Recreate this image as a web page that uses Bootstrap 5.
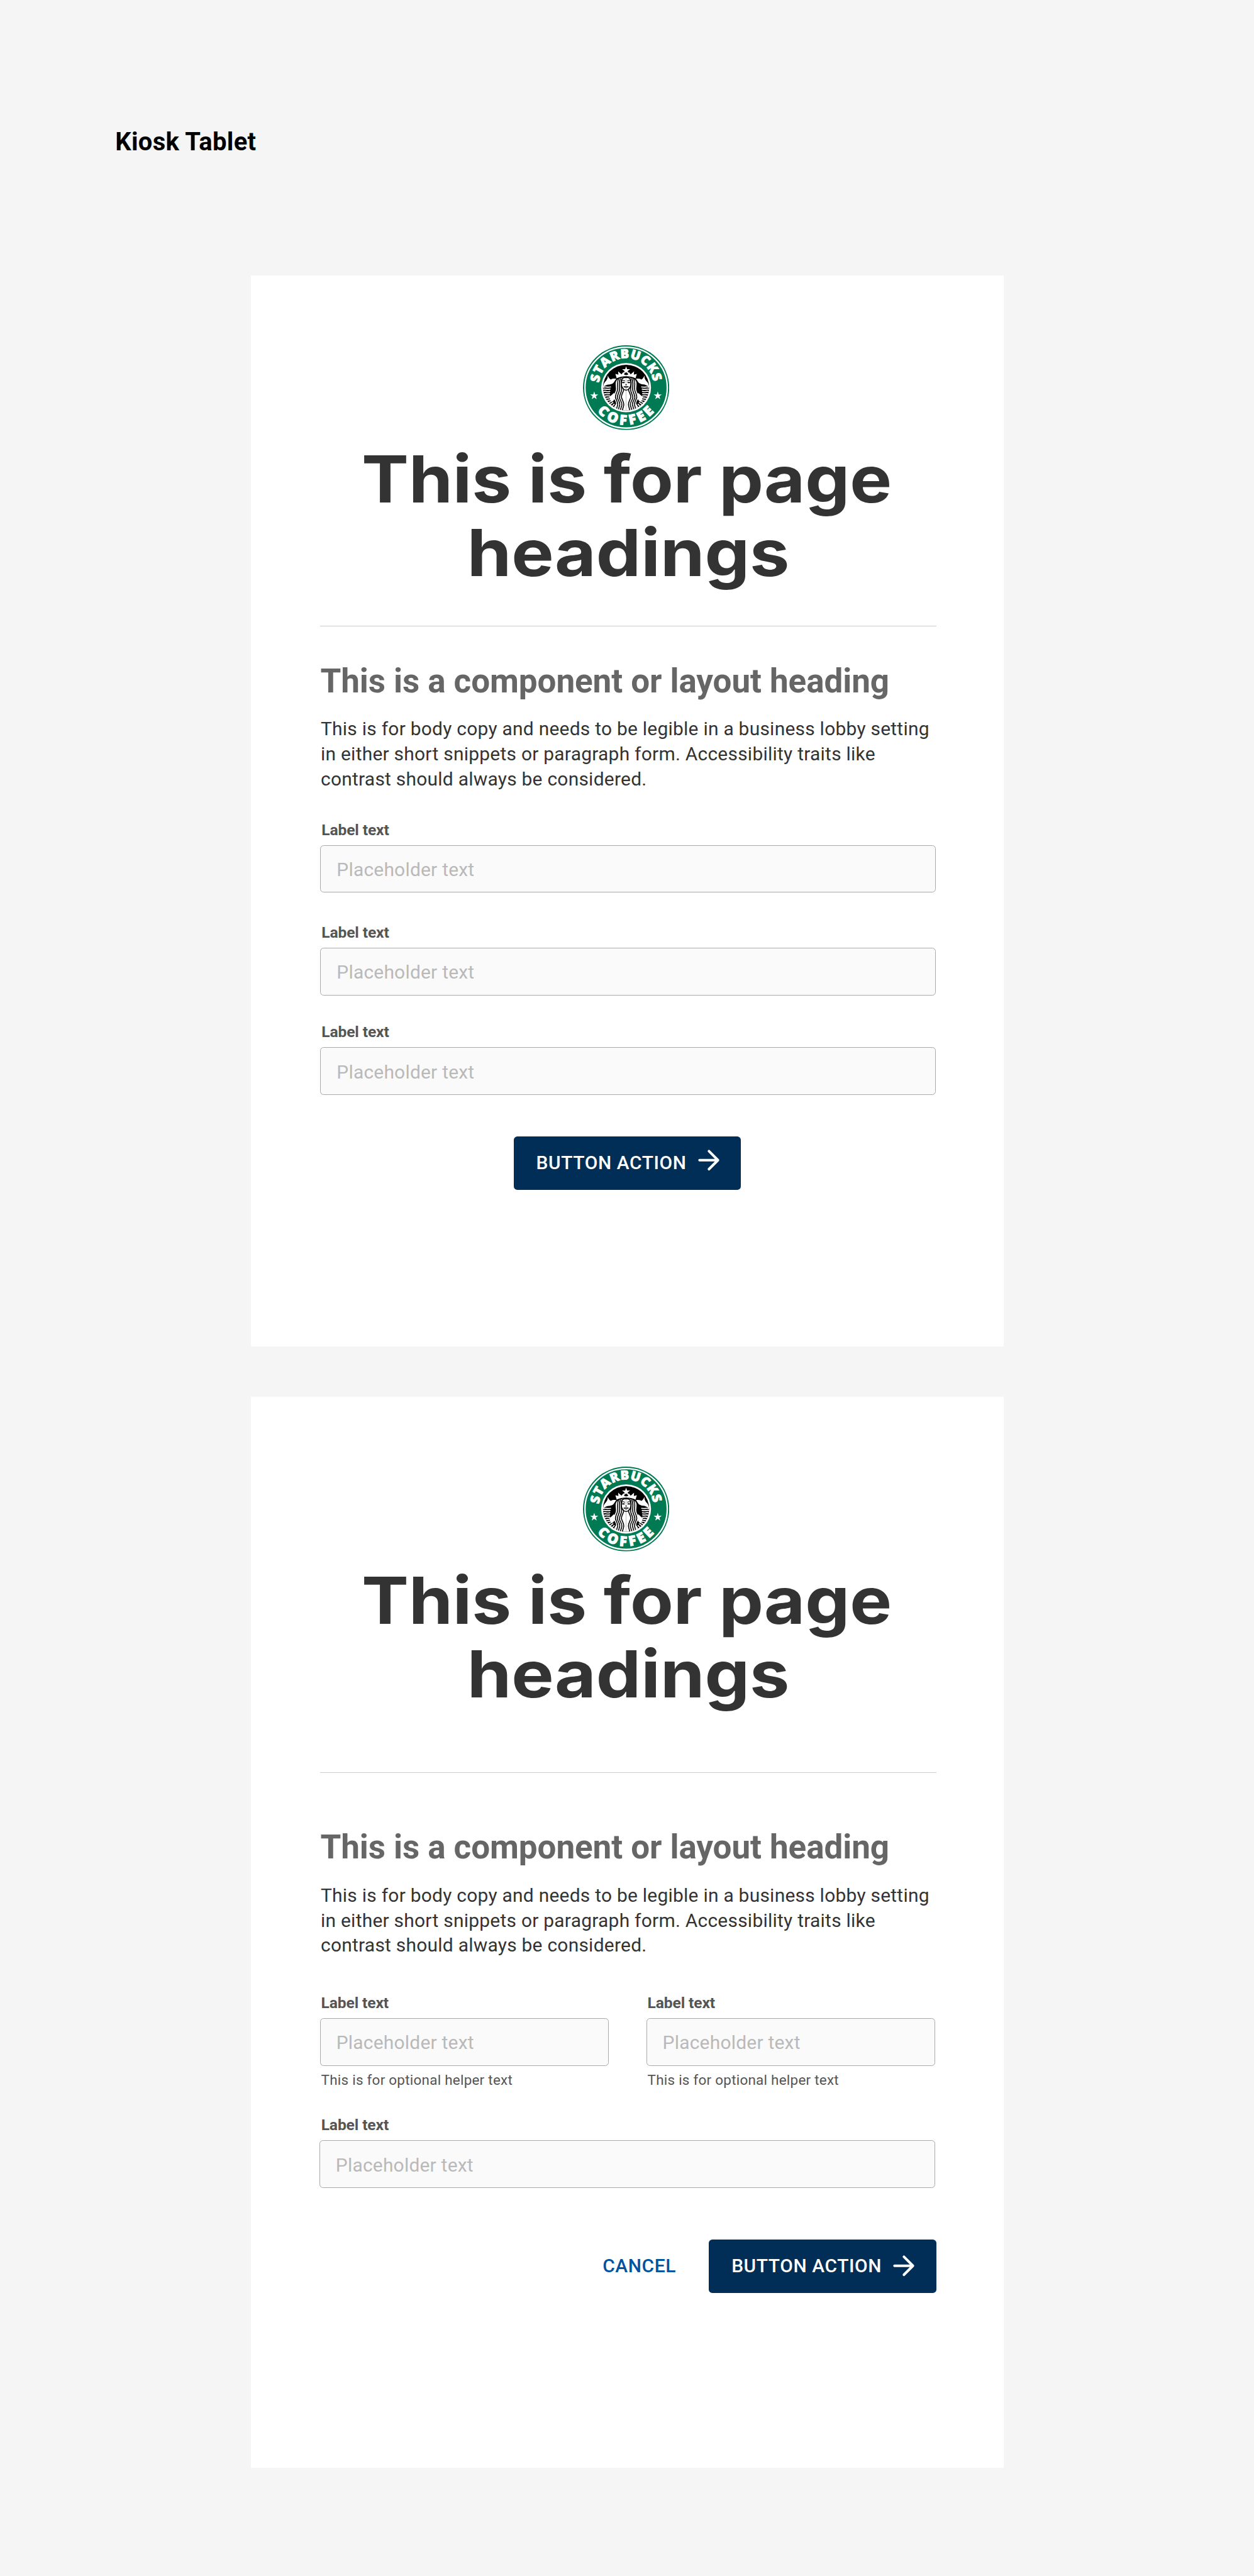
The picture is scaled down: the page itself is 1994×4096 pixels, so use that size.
<!DOCTYPE html>
<html lang="en">
<head>
<meta charset="utf-8">
<meta name="viewport" content="width=device-width, initial-scale=1">
<title>Kiosk Tablet</title>
<link href="https://cdn.jsdelivr.net/npm/bootstrap@5.3.0/dist/css/bootstrap.min.css" rel="stylesheet">
<style>
:root { --u: .62351px; }
body { background: #f5f5f5; font-family: Roboto, sans-serif; color: #333; }
.board { width: calc(3198 * var(--u)); height: 4096px; overflow: hidden; }
.board-title { font-size: calc(64 * var(--u)); line-height: calc(76 * var(--u)); letter-spacing: calc(.5 * var(--u)); color: #000; padding: calc(323.8 * var(--u)) 0 0 calc(294 * var(--u)); height: calc(702 * var(--u)); }
.screen { width: calc(1920 * var(--u)); height: calc(2732 * var(--u)); margin-left: calc(640 * var(--u)); padding: calc(178.7 * var(--u)) calc(172 * var(--u)) 0 calc(176 * var(--u)); background: #fff; }
.screen + .screen { margin-top: calc(128 * var(--u)); }
.logo { width: calc(220 * var(--u)); height: calc(216.3 * var(--u)); margin-right: calc(11.4 * var(--u)); }
.page-title { font-family: Inter, sans-serif; font-weight: 700; font-size: calc(166 * var(--u)); line-height: calc(188.2 * var(--u)); margin: calc(30 * var(--u)) calc(8 * var(--u)) 0 0; white-space: nowrap; color: #333; }
.page-title span { display: inline-block; vertical-align: top; transform: scaleX(1.085); }
.page-title .l2 { transform: scaleX(1.095); margin-left: calc(10 * var(--u)); }
.rule { height: 1px; background: #ccc; margin-top: calc(91.8 * var(--u)); margin-bottom: calc(.3 * var(--u)); }
.section-title { font-weight: 700; font-size: calc(85 * var(--u)); line-height: calc(100 * var(--u)); letter-spacing: calc(-.1 * var(--u)); color: #666; margin: calc(90 * var(--u)) 0 0 calc(1 * var(--u)); white-space: nowrap; }
.copy { font-size: calc(48 * var(--u)); line-height: calc(64 * var(--u)); letter-spacing: calc(.42 * var(--u)); margin: calc(40.8 * var(--u)) 0 0 calc(2 * var(--u)); white-space: nowrap; }
.form-label { display: block; font-weight: 700; font-size: calc(39.5 * var(--u)); line-height: calc(48 * var(--u)); letter-spacing: calc(-.2 * var(--u)); color: #555; margin: 0 0 calc(14.9 * var(--u)) calc(2 * var(--u)); }
.stacked .form-label { margin-left: calc(3 * var(--u)); }
.form-control, .form-control:focus { height: calc(121.5 * var(--u)); padding: calc(3 * var(--u)) calc(40 * var(--u)) 0; font-size: calc(48 * var(--u)); letter-spacing: calc(.38 * var(--u)); background: #fafafa; border: 1px solid #a9a9a9; border-radius: calc(9 * var(--u)); }
.form-control::placeholder { color: #b9b9b9; opacity: 1; }
.field { margin-left: calc(1 * var(--u)); }
.stacked .field { width: calc(1570 * var(--u)); }
.stacked .f1 { margin-top: calc(72.7 * var(--u)); }
.stacked .f2 { margin-top: calc(77.6 * var(--u)); }
.stacked .f3 { margin-top: calc(69.6 * var(--u)); }
.helper { font-size: calc(36 * var(--u)); line-height: calc(44 * var(--u)); letter-spacing: calc(.4 * var(--u)); color: #555; margin: calc(15 * var(--u)) 0 0 calc(2 * var(--u)); }
.pair { gap: calc(96.3 * var(--u)); margin-top: calc(90.6 * var(--u)); }
.pair .field { width: calc(736 * var(--u)); }
.pair .field + .field { margin-left: 0; }
.split .form-control { padding-left: calc(39 * var(--u)); }
.wide { width: calc(1569.5 * var(--u)); margin: calc(68.2 * var(--u)) 0 0 calc(-.5 * var(--u)); }
.wide .form-label { margin-left: calc(3.5 * var(--u)); }
.split .rule { margin-top: calc(155.8 * var(--u)); }
.split .section-title { margin-top: calc(139.8 * var(--u)); }
.action { width: calc(580 * var(--u)); height: calc(136 * var(--u)); padding: 0 calc(53 * var(--u)) 0 calc(57.5 * var(--u)); border: 0; border-radius: calc(9 * var(--u)); background: #002e56; color: #fff; font-weight: 500; font-size: calc(48 * var(--u)); line-height: 1; letter-spacing: calc(.95 * var(--u)); text-align: left; white-space: nowrap; }
.action:hover { background: #002e56; color: #fff; }
.arrow { width: calc(60 * var(--u)); height: calc(60 * var(--u)); }
.stacked .action { margin: calc(105.5 * var(--u)) 0 0 calc(494 * var(--u)); }
.stacked .arrow { margin-top: calc(-16 * var(--u)); }
.actions { margin-top: calc(131 * var(--u)); gap: calc(84 * var(--u)); }
.cancel { color: #00539f; font-weight: 500; font-size: calc(48 * var(--u)); line-height: 1; letter-spacing: calc(.95 * var(--u)); text-decoration: none; padding: 0; border: 0; }
.wordmark { font-family: "Open Sans", sans-serif; font-weight: 800; fill: #fff; stroke: #fff; }
</style>
</head>
<body>
<svg class="position-absolute" width="0" height="0" aria-hidden="true">
  <defs>
    <path id="arcTop" d="M172 336A208 206 0 0 1 587 340"/>
    <path id="arcBottom" d="M157 552A285 284 0 0 0 596 555"/>
    <clipPath id="disc"><ellipse cx="379" cy="371" rx="177" ry="175"/></clipPath>
    <g id="sirenHalf">
      <!-- tail fin -->
      <path fill="#fff" d="M239 278C246 296 252 304 262 309C274 302 288 300 304 304C294 312 292 324 282 334C266 348 246 346 232 350C220 354 212 360 203 370C204 352 208 342 216 330C232 314 240 300 239 278Z"/>
      <!-- scales -->
      <g fill="none" stroke="#fff" stroke-width="8" stroke-linecap="round">
        <path d="M196 375C214 355 228 374 260 366"/>
        <path d="M194 386C216 373 230 392 256 382"/>
        <path d="M197 405C219 390 232 408 254 400"/>
        <path d="M200 424C222 408 234 423 252 417"/>
        <path d="M206 443C226 425 238 438 252 434"/>
        <path d="M213 462C230 443 241 454 254 449"/>
        <path d="M222 480C238 458 249 470 262 463"/>
        <path d="M236 497C246 477 258 484 268 474"/>
        <path d="M251 511C260 490 270 494 278 484"/>
        <path d="M268 524C272 506 282 506 287 498"/>
        <path d="M284 535C290 516 298 512 302 502"/>
      </g>
      <path fill="#fff" d="M250 440C264 434 276 420 286 410L296 440C290 462 282 474 268 480C260 470 256 456 250 440Z"/>
      <!-- hair -->
      <path fill="#fff" d="M379 292C346 292 314 300 304 320C292 346 306 366 300 392C294 416 280 424 285 448C290 470 306 478 301 500C298 518 292 526 291 540L379 550Z"/>
      <g fill="none" stroke="#000" stroke-width="7.5" stroke-linecap="round">
        <path d="M322 304C303 330 318 360 314 386C309 414 294 424 298 448C304 470 318 482 314 504C310 520 306 530 304 544"/>
        <path d="M336 301C318 328 332 358 329 386C325 416 309 426 313 450C319 472 334 482 330 504C326 520 321 530 319 548"/>
        <path d="M347 302C334 328 343 356 345 384C343 416 325 426 328 450C334 472 350 484 346 506C342 524 336 534 334 550"/>
        <path d="M379 294C350 294 345 304 342 326C340 352 348 372 360 384C362 402 341 422 343 444C348 466 362 480 361 502C359 520 352 532 350 550"/>
      </g>
      <path fill="none" stroke="#000" stroke-width="6" d="M379 290C346 289 322 296 312 303"/>
      <!-- crown -->
      <path fill="#fff" d="M379 274L367 273L359 250L344 270L318 247L320 272L297 266L307 300C328 288 354 284 379 284Z"/>
      <!-- face -->
      <path fill="none" stroke="#000" stroke-width="5" stroke-linecap="round" d="M346 321C352 314 361 315 368 320M349 332Q358 327 367 332M350 333Q358 336 366 333M374 349H379M361 364Q369 361 379 364M364 366Q370 371 379 371"/>
      <path fill="none" stroke="#000" stroke-width="6" stroke-linecap="round" d="M353 374C360 386 369 390 379 390"/>
    </g>
    <path id="star" d="M0-32L7.5-10H31L12 4L19 27L0 13L-19 27L-12 4L-31-10H-7.5Z"/>
    <symbol id="badgeLogo" viewBox="49 47 660 649" preserveAspectRatio="none">
      <ellipse cx="379" cy="371.5" rx="330" ry="324.5" fill="#007a53"/>
      <ellipse cx="379" cy="371.5" rx="315" ry="309.5" fill="none" stroke="#fff" stroke-width="11"/>
      <ellipse cx="379" cy="371.5" rx="190.500" ry="188.500" fill="#fff"/>
      <ellipse cx="379" cy="371" rx="177" ry="175" fill="#000"/>
      <g clip-path="url(#disc)">
        <use href="#sirenHalf"/>
        <use href="#sirenHalf" transform="matrix(-1 0 0 1 758 0)"/>
        <path d="M379 262L362 273H396Z"/>
      </g>
      <use href="#star" fill="#fff" x="379" y="240"/>
      <use href="#star" fill="#fff" x="135" y="433"/>
      <use href="#star" fill="#fff" x="621" y="433"/>
      <text class="wordmark" font-size="98" stroke-width="4"><textPath href="#arcTop" startOffset="1" textLength="606">STARBUCKS</textPath></text>
      <text class="wordmark" font-size="105" stroke-width="5"><textPath href="#arcBottom" startOffset="1" textLength="498">COFFEE</textPath></text>
    </symbol>
    <symbol id="arrowRight" viewBox="0 0 60 60">
      <path fill="none" stroke="#fff" stroke-width="6.500" stroke-linecap="round" stroke-linejoin="round" d="M7 30H54M31 7L54 30L31 53"/>
    </symbol>
  </defs>
</svg>

<main class="board">
  <h1 class="board-title m-0 fw-bold">Kiosk Tablet</h1>

  <section class="screen stacked">
    <div class="d-flex justify-content-center"><svg class="logo" role="img" aria-label="Starbucks Coffee"><use href="#badgeLogo"/></svg></div>
    <h2 class="page-title text-center"><span class="l1">This is for page</span><br><span class="l2">headings</span></h2>
    <div class="rule"></div>
    <h3 class="section-title">This is a component or layout heading</h3>
    <p class="copy mb-0">This is for body copy and needs to be legible in a business lobby setting<br>in either short snippets or paragraph form. Accessibility traits like<br>contrast should always be considered.</p>
    <form>
      <div class="field f1"><label class="form-label" for="a1">Label text</label><input id="a1" class="form-control" placeholder="Placeholder text"></div>
      <div class="field f2"><label class="form-label" for="a2">Label text</label><input id="a2" class="form-control" placeholder="Placeholder text"></div>
      <div class="field f3"><label class="form-label" for="a3">Label text</label><input id="a3" class="form-control" placeholder="Placeholder text"></div>
      <button type="button" class="btn action d-flex align-items-center justify-content-between"><span>BUTTON ACTION</span><svg class="arrow"><use href="#arrowRight"/></svg></button>
    </form>
  </section>

  <section class="screen split">
    <div class="d-flex justify-content-center"><svg class="logo" role="img" aria-label="Starbucks Coffee"><use href="#badgeLogo"/></svg></div>
    <h2 class="page-title text-center"><span class="l1">This is for page</span><br><span class="l2">headings</span></h2>
    <div class="rule"></div>
    <h3 class="section-title">This is a component or layout heading</h3>
    <p class="copy mb-0">This is for body copy and needs to be legible in a business lobby setting<br>in either short snippets or paragraph form. Accessibility traits like<br>contrast should always be considered.</p>
    <form>
      <div class="d-flex pair">
        <div class="field"><label class="form-label" for="b1">Label text</label><input id="b1" class="form-control" placeholder="Placeholder text"><div class="helper">This is for optional helper text</div></div>
        <div class="field"><label class="form-label" for="b2">Label text</label><input id="b2" class="form-control" placeholder="Placeholder text"><div class="helper">This is for optional helper text</div></div>
      </div>
      <div class="wide"><label class="form-label" for="b3">Label text</label><input id="b3" class="form-control" placeholder="Placeholder text"></div>
      <div class="d-flex justify-content-end align-items-center actions">
        <button type="button" class="btn cancel">CANCEL</button>
        <button type="button" class="btn action d-flex align-items-center justify-content-between"><span>BUTTON ACTION</span><svg class="arrow"><use href="#arrowRight"/></svg></button>
      </div>
    </form>
  </section>
</main>
<script src="https://cdn.jsdelivr.net/npm/bootstrap@5.3.0/dist/js/bootstrap.bundle.min.js"></script>
</body>
</html>
